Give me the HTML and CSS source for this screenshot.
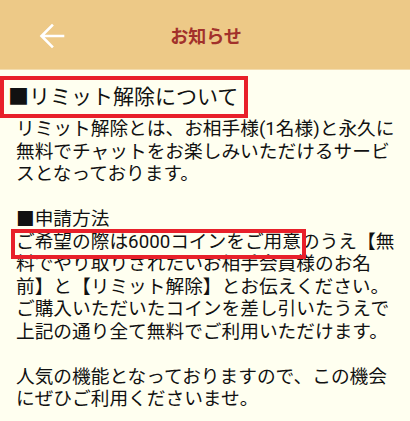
FILE: index.html
```html
<!DOCTYPE html>
<html lang="ja">
<head>
<meta charset="utf-8">
<link rel="stylesheet" href="styles.css">
</head>
<body>
<header class="appbar">
  <div class="appbar-left">
    <svg class="back" width="26" height="26" viewBox="0 0 26 26" aria-hidden="true">
      <path d="M24 13H3.5M13 2.5L2.5 13L13 23.5" fill="none" stroke="#ffffff" stroke-width="2.6" stroke-linecap="square"/>
    </svg>
  </div>
  <h1 class="title">お知らせ</h1>
  <div></div>
</header>
<main class="content">
  <h2 class="heading">■リミット解除について</h2>
  <div class="body">
    <p class="line">リミット解除とは、お相手様(1名様)と永久に</p>
    <p class="line">無料でチャットをお楽しみいただけるサービ</p>
    <p class="line">スとなっております。</p>
    <p class="line blank">&nbsp;</p>
    <p class="line">■申請方法</p>
    <p class="line"><span class="mark">ご希望の際は6000コインをご用意</span>のうえ【無</p>
    <p class="line">料でやり取りされたいお相手会員様のお名</p>
    <p class="line">前】と【リミット解除】とお伝えください。</p>
    <p class="line">ご購入いただいたコインを差し引いたうえで</p>
    <p class="line">上記の通り全て無料でご利用いただけます。</p>
    <p class="line blank">&nbsp;</p>
    <p class="line">人気の機能となっておりますので、この機会</p>
    <p class="line">にぜひご利用くださいませ。</p>
  </div>
</main>
</body>
</html>
```
FILE: styles.css
```css
html, body {
  margin: 0;
  padding: 0;
}
body {
  width: 410px;
  height: 421px;
  overflow: hidden;
  background: #fffff0;
  font-family: Roboto, "Noto Sans CJK JP", sans-serif;
  color: #111111;
}
.appbar {
  height: 70px;
  background: #edc987;
  display: grid;
  grid-template-columns: 1fr auto 1fr;
  align-items: center;
  border-bottom: 1px solid #f3dcae;
  box-sizing: border-box;
}
.appbar-left {
  display: flex;
  align-items: center;
  padding-left: 39px;
  padding-top: 2px;
}
.back {
  display: block;
}
.title {
  margin: 0;
  font-size: 18px;
  font-weight: 700;
  color: #a2312b;
  font-family: "Noto Sans CJK JP", sans-serif;
  padding-left: 2px;
  padding-top: 1px;
}
.content {
  padding-top: 6px;
}
.heading {
  margin: 0;
  display: inline-block;
  border: 4px solid #e8202a;
  border-left-width: 4px;
  padding: 0 6px 0 4px;
  font-size: 21px;
  line-height: 34px;
  font-weight: 400;
  color: #111111;
  vertical-align: top;
}
.body {
  padding-left: 16px;
  font-size: 18.7px;
  line-height: 22.5px;
}
.line {
  margin: 0;
  white-space: nowrap;
}
.mark {
  position: relative;
}
.mark::after {
  content: "";
  position: absolute;
  left: -5px;
  right: -5px;
  top: -2px;
  bottom: -6px;
  border: 4px solid #e8202a;
}
```
